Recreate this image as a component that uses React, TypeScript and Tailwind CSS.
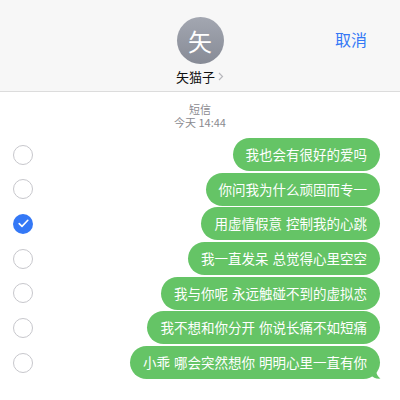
import React from "react";

const msgs = [
  "我也会有很好的爱吗",
  "你问我为什么顽固而专一",
  "用虚情假意 控制我的心跳",
  "我一直发呆 总觉得心里空空",
  "我与你呢 永远触碰不到的虚拟恋",
  "我不想和你分开 你说长痛不如短痛",
  "小乖 哪会突然想你 明明心里一直有你",
];

export default function App() {
  return (
    <div
      className="w-[400px] h-[400px] bg-white overflow-hidden relative"
      style={{ fontFamily: '"Noto Sans CJK SC", "Noto Sans", sans-serif' }}
    >
      <div className="h-[92px] bg-[#f7f7f7] border-b border-[#dcdcdc] relative flex flex-col items-center pt-[17px]">
        <div className="w-[47px] h-[47px] rounded-full bg-gradient-to-b from-[#a3a7b1] to-[#878b96] flex items-center justify-center text-white text-[24px] leading-none">
          矢
        </div>
        <div className="mt-[6px] flex items-center text-[13px] leading-none text-[#111]">
          <span>矢猫子</span>
          <svg width="6" height="9" viewBox="0 0 6 9" className="ml-[3px]">
            <path d="M1 1 L4.5 4.5 L1 8" fill="none" stroke="#b8b8bd" strokeWidth="1.2" />
          </svg>
        </div>
        <div className="absolute right-[33px] top-[31px] text-[16px] leading-none text-[#3478f6]">取消</div>
      </div>
      <div className="flex flex-col items-center mt-[11px] text-[11px] leading-[13px] text-[#8a8a8f]">
        <div>短信</div>
        <div>今天 14:44</div>
      </div>
      <div className="mt-[9px] flex flex-col gap-[1.7px]">
        {msgs.map((m, i) => (
          <div key={i} className="flex items-center h-[33px] pl-[13px] pr-[20px]">
            {i === 2 ? (
              <div className="w-[20px] h-[20px] rounded-full bg-[#3478f6] flex items-center justify-center shrink-0">
                <svg width="11" height="9" viewBox="0 0 11 9">
                  <path d="M1.2 4.6 L4 7.4 L9.8 1.3" fill="none" stroke="white" strokeWidth="1.6" strokeLinecap="round" strokeLinejoin="round" />
                </svg>
              </div>
            ) : (
              <div className="w-[20px] h-[20px] rounded-full border-[1.5px] border-[#c7c7cc] shrink-0" />
            )}
            <div className="flex-1 flex justify-end">
              <div className="relative h-[33px] rounded-[17px] bg-[#65c466] text-white text-[13.5px] leading-[33px] px-[13px] whitespace-nowrap [word-spacing:1px]">
                {m}
                {i === msgs.length - 1 && (
                  <svg width="14" height="16" viewBox="0 0 14 16" className="absolute right-[-5px] bottom-0">
                    <path d="M0 0 L4 0 C4 8 6 13 9.5 15.6 C5 16 2 14.5 0 12 Z" fill="#65c466" />
                  </svg>
                )}
              </div>
            </div>
          </div>
        ))}
      </div>
    </div>
  );
}
